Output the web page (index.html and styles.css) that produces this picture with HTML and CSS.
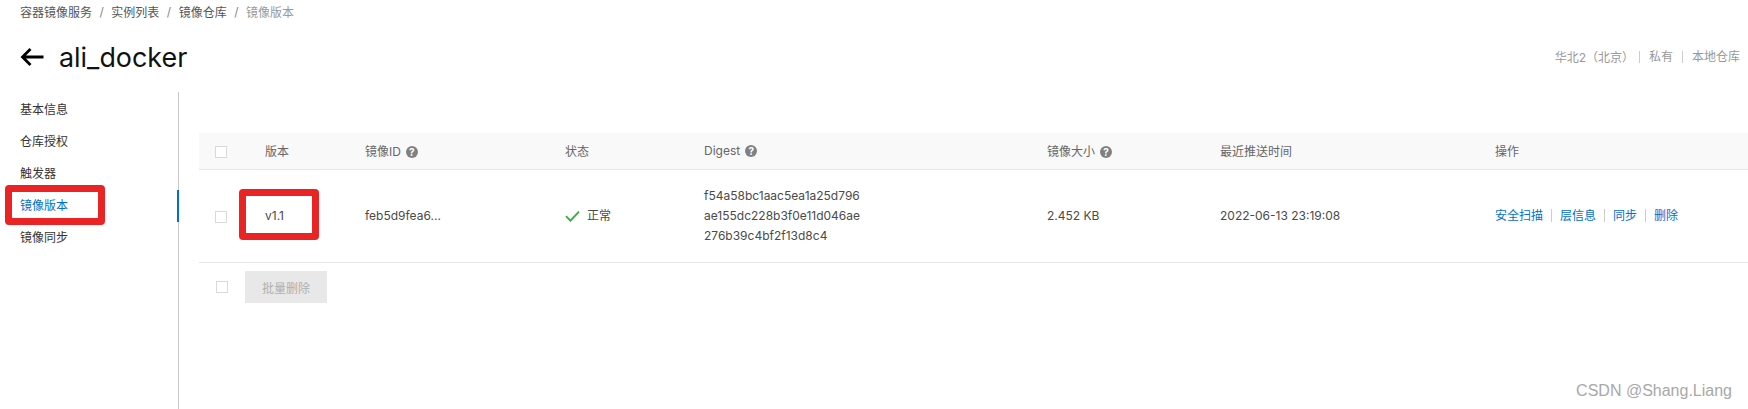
FILE: index.html
```html
<!DOCTYPE html>
<html lang="zh-CN">
<head>
  <meta charset="UTF-8">
  <title>镜像版本</title>
  <link rel="stylesheet" href="styles.css">
</head>
<body>
  <nav class="breadcrumb">
    <span>容器镜像服务</span><i>/</i><span>实例列表</span><i>/</i><span>镜像仓库</span><i>/</i><span class="current">镜像版本</span>
  </nav>

  <header class="page-head">
    <svg class="back" width="24" height="20" viewBox="0 0 24 20"><path d="M23.5 10H2.5M10.5 2l-8 8 8 8" fill="none" stroke="#000" stroke-width="2.8"/></svg>
    <h1>ali_docker</h1>
    <div class="meta">
      <span class="region">华北2（北京）</span><span class="meta-item">私有</span><span class="meta-item">本地仓库</span>
    </div>
  </header>

  <div class="main">
    <ul class="side">
      <li>基本信息</li>
      <li>仓库授权</li>
      <li>触发器</li>
      <li class="active">镜像版本</li>
      <li>镜像同步</li>
    </ul>

    <div class="content">
      <table>
        <colgroup>
          <col class="c-check"><col class="c-ver"><col class="c-id"><col class="c-state"><col class="c-digest"><col class="c-size"><col class="c-time"><col>
        </colgroup>
        <thead>
          <tr>
            <th><span class="check"></span></th>
            <th>版本</th>
            <th>镜像ID<span class="help">?</span></th>
            <th>状态</th>
            <th>Digest<span class="help">?</span></th>
            <th>镜像大小<span class="help">?</span></th>
            <th>最近推送时间</th>
            <th>操作</th>
          </tr>
        </thead>
        <tbody>
          <tr>
            <td><span class="check"></span></td>
            <td>v1.1</td>
            <td>feb5d9fea6...</td>
            <td>
              <span class="state">
                <svg width="15" height="12" viewBox="0 0 15 12"><path d="M1 6.2l4.4 4.4L14 1.6" fill="none" stroke="#2fb135" stroke-width="1.8"/></svg>
                正常
              </span>
            </td>
            <td>f54a58bc1aac5ea1a25d796<br>ae155dc228b3f0e11d046ae<br>276b39c4bf2f13d8c4</td>
            <td>2.452 KB</td>
            <td>2022-06-13 23:19:08</td>
            <td class="actions"><a>安全扫描</a><a>层信息</a><a>同步</a><a>删除</a></td>
          </tr>
        </tbody>
      </table>
      <div class="bulk">
        <span class="check"></span>
        <button type="button" disabled>批量删除</button>
      </div>
    </div>
  </div>

  <!-- red annotation boxes drawn on top of the screenshot -->
  <div class="mark mark-side"></div>
  <div class="mark mark-ver"></div>
  <div class="watermark">CSDN @Shang.Liang</div>
</body>
</html>
```

FILE: styles.css
```css
html, body {
  margin: 0;
  padding: 0;
  height: 100%;
  overflow: hidden;
}

body {
  position: relative;
  background: #fff;
  color: #333;
  font-family: Inter, "Noto Sans CJK SC", sans-serif;
  font-size: 12px;
}

.breadcrumb {
  display: flex;
  align-items: center;
  height: 20px;
  padding: 1px 0 0 20px;
  color: #555;
}

.breadcrumb i {
  font-style: normal;
  color: #888;
  margin: 0 7.5px;
}

.breadcrumb .current {
  color: #999;
}

.page-head {
  display: flex;
  align-items: center;
  height: 71px;
  padding: 0 8px 0 20px;
  box-sizing: border-box;
}

.back {
  margin-right: 15px;
}

h1 {
  margin: 0;
  font-size: 26.9px;
  font-weight: 400;
  color: #111;
}

.meta {
  margin-left: auto;
  display: flex;
  align-items: center;
  color: #999;
}

.region {
  margin-right: 5px;
}

.meta-item {
  border-left: 1px solid #ccc;
  line-height: 12px;
  padding-left: 9px;
  margin-right: 9px;
}

.meta-item:last-child {
  margin-right: 0;
}

.main {
  display: flex;
  height: 318px;
}

.side {
  list-style: none;
  margin: 0;
  padding: 2px 0 0;
  width: 179px;
  box-sizing: border-box;
  border-right: 1px solid #c8c8c8;
  flex: none;
}

.side li {
  height: 32px;
  line-height: 32px;
  padding-left: 20px;
  color: #333;
}

.side li.active {
  color: #0070cc;
  border-right: 1px solid #0070cc;
  box-shadow: inset -1px 0 0 #0070cc;
  margin-right: -1px;
}

.content {
  flex: 1;
  padding: 41px 0 0 20px;
  min-width: 0;
}

table {
  width: 100%;
  border-collapse: collapse;
  table-layout: fixed;
}

.c-check { width: 66px; }
.c-ver { width: 100px; }
.c-id { width: 200px; }
.c-state { width: 139px; }
.c-digest { width: 343px; }
.c-size { width: 173px; }
.c-time { width: 275px; }

th {
  height: 35px;
  padding: 0 0 1px;
  background: #f9f9f9;
  border-bottom: 1px solid #e8e8e8;
  color: #666;
  font-weight: 400;
  text-align: left;
}

td {
  height: 92px;
  padding: 0;
  border-bottom: 1px solid #e8e8e8;
  line-height: 20px;
  color: #4a4a4a;
}

th:first-child, td:first-child {
  padding-left: 16px;
}

.check {
  display: block;
  width: 10px;
  height: 10px;
  border: 1px solid #d9d9d9;
  background: #fff;
}

th .check {
  margin-top: 2px;
}

td .check {
  margin-top: 2px;
}

.help {
  display: inline-block;
  width: 12px;
  height: 12px;
  line-height: 12px;
  margin-left: 5px;
  border-radius: 50%;
  background: #808080;
  color: #fff;
  font-size: 10px;
  font-weight: 700;
  text-align: center;
  vertical-align: 0;
}

.state {
  display: flex;
  align-items: center;
  gap: 7px;
}

.actions a {
  display: inline-block;
  line-height: 13px;
  color: #0070cc;
  padding-right: 8px;
  margin-right: 8px;
  border-right: 1px solid #ccc;
}

.actions a:last-child {
  border-right: 0;
}

.bulk {
  display: flex;
  align-items: center;
  padding: 8px 0 0 17px;
  gap: 17px;
}

.bulk button {
  width: 82px;
  height: 32px;
  border: 0;
  padding: 0;
  background: #e8e8e8;
  color: #b0b0b0;
  font: inherit;
}

.mark {
  position: absolute;
  box-sizing: border-box;
  border: 7px solid #ea2424;
  border-radius: 4px;
}

.mark-side {
  left: 5px;
  top: 185px;
  width: 100px;
  height: 40px;
}

.mark-ver {
  left: 239px;
  top: 189px;
  width: 80px;
  height: 51px;
}

.watermark {
  position: absolute;
  right: 16px;
  bottom: 9px;
  color: #a8a8a8;
  font-family: "Liberation Sans", sans-serif;
  font-size: 16px;
}
```
